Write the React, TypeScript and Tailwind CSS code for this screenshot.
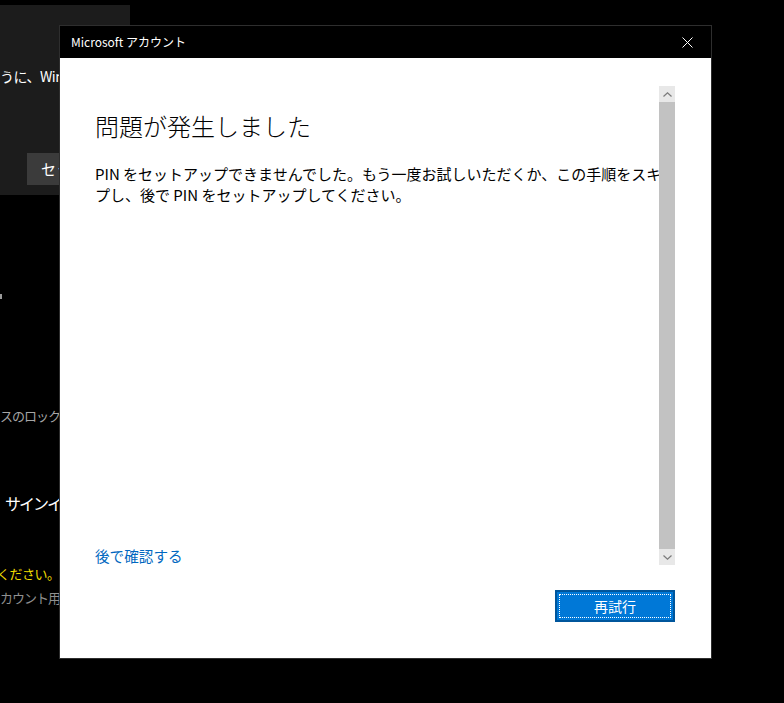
import React from 'react';

const jp = { fontFamily: '"Noto Sans CJK JP", "Noto Sans", sans-serif' };

function BackgroundWindow() {
  return (
    <>
      {/* settings window behind the dialog */}
      <div className="absolute left-0 top-[5px] h-[190px] w-[130px] bg-[#1c1c1c]">
        <div className="absolute left-0 top-[56px] whitespace-nowrap text-[14px] leading-[30px] tracking-[-0.5px] text-white">
          うに、Windows
        </div>
        <div className="absolute left-[27px] top-[148px] flex h-[32px] w-[100px] items-center whitespace-nowrap bg-[#3b3b3b] pl-[14px] text-[15px] text-white">
          セットアップ
        </div>
      </div>
      <div className="absolute left-0 top-[294px] h-[5px] w-[2px] bg-[#9a9a9a]" />
      <div className="absolute left-0 top-[404px] whitespace-nowrap text-[13px] leading-[24px] tracking-[-1px] text-[#a6a6a6]">
        スのロックを
      </div>
      <div className="absolute left-[5px] top-[491px] whitespace-nowrap text-[16px] leading-[24px] tracking-[-2px] text-white">
        サインイン
      </div>
      <div className="absolute left-[-3px] top-[563px] whitespace-nowrap text-[13px] leading-[22px] tracking-[-0.5px] text-[#f0dc00]">
        ください。
      </div>
      <div className="absolute left-0 top-[587px] whitespace-nowrap text-[13px] leading-[22px] tracking-[-1px] text-[#8f8f8f]">
        カウント用
      </div>
    </>
  );
}

function ScrollBar() {
  return (
    <div className="flex w-[16px] flex-col pt-[28px]">
      <div className="flex h-[16px] items-center justify-center bg-[#e8e8e8]">
        <svg width="9" height="5" viewBox="0 0 9 5">
          <path d="M0.5 4.5 L4.5 0.8 L8.5 4.5" fill="none" stroke="#7a7a7a" strokeWidth="1.2" />
        </svg>
      </div>
      <div className="flex-1 bg-[#c2c2c2]" />
      <div className="flex h-[16px] items-center justify-center bg-[#e8e8e8]">
        <svg width="9" height="5" viewBox="0 0 9 5">
          <path d="M0.5 0.5 L4.5 4.2 L8.5 0.5" fill="none" stroke="#7a7a7a" strokeWidth="1.2" />
        </svg>
      </div>
    </div>
  );
}

function Dialog() {
  return (
    <div className="absolute left-[59px] top-[25px] flex h-[634px] w-[653px] flex-col border border-[#2e2e2e] bg-white">
      <div className="flex h-[32px] items-center justify-between bg-black pl-[11px] pr-[18px]">
        <span className="text-[12px] text-white">Microsoft アカウント</span>
        <svg width="11" height="11" viewBox="0 0 11 11">
          <path d="M0.5 0.5 L10.5 10.5 M10.5 0.5 L0.5 10.5" stroke="#ffffff" strokeWidth="1" />
        </svg>
      </div>
      <div className="flex h-[507px] flex-row">
        {/* content runs under the scroll bar, so the column clips it */}
        <div className="flex min-w-0 flex-1 flex-col overflow-hidden pl-[35px] pt-[51px]">
          <h1 className="text-[24px] font-light leading-[34px] text-black">問題が発生しました</h1>
          <p className="mt-[20px] w-[584px] shrink-0 text-[15px] leading-[21px] text-black">
            PIN をセットアップできませんでした。もう一度お試しいただくか、この手順をスキップし、後で PIN をセットアップしてください。
          </p>
          <a className="mt-auto mb-[-3px] text-[14.6px] leading-[24px] text-[#0067c0]" href="#">
            後で確認する
          </a>
        </div>
        <ScrollBar />
        <div className="w-[36px]" />
      </div>
      <div className="flex justify-end pr-[36px] pt-[25px]">
        <button className="flex h-[32px] w-[120px] items-center justify-center border-2 border-[#00569c] bg-[#0078d7] p-[2px]">
          <span className="flex h-full w-full items-center justify-center border border-dotted border-white text-[14px] text-white">
            再試行
          </span>
        </button>
      </div>
    </div>
  );
}

export default function App() {
  return (
    <div className="relative h-[703px] w-[784px] overflow-hidden bg-black" style={jp}>
      <BackgroundWindow />
      <Dialog />
    </div>
  );
}
